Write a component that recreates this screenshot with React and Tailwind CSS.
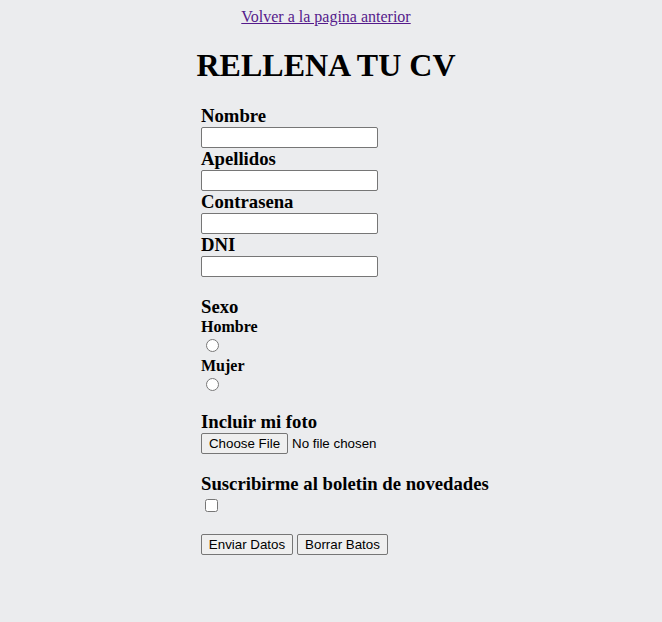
import { useState } from "react";

const Field = ({ label, type = "text" }) => (
    <div>
        <label className="block h-[22px] text-[18.72px] leading-[22px] font-bold">{label}</label>
        <input
            type={type}
            className="block w-[177px] h-[21px] bg-white border border-[#767676] rounded-[2px] px-[2px] text-[13.33px] font-['Liberation_Sans',sans-serif]"
        />
    </div>
);

const btn = "h-[21px] whitespace-nowrap bg-[#efefef] border border-[#767676] rounded-[2px] text-[13.33px] leading-[19px] text-black font-['Liberation_Sans',Arial,sans-serif]";

const App = () => {
    const [sexo, setSexo] = useState("");
    const [boletin, setBoletin] = useState(false);

    return (
        <div className="min-h-[622px] bg-[#ebecee] text-black font-['Liberation_Serif','Times_New_Roman',serif] pt-[8px]">
            <div className="w-[652px]">
                {/* enlace */}
                <div className="text-center h-[18px] leading-[18px] text-[16px]">
                    <a href="#" className="text-[#551a8b] underline">Volver a la pagina anterior</a>
                </div>

                <h1 className="text-center text-[32px] font-bold leading-[37px] mt-[21px] mb-[21px]">RELLENA TU CV</h1>

                <form className="pl-[201px]" onSubmit={(e) => e.preventDefault()}>
                    <Field label="Nombre" />
                    <Field label="Apellidos" />
                    <Field label="Contrasena" type="password" />
                    <Field label="DNI" />

                    {/* sexo */}
                    <div className="mt-[19px]">
                        <div className="h-[22px] text-[18.72px] leading-[22px] font-bold">Sexo</div>
                        <div className="h-[18px] text-[16px] leading-[18px] font-bold">Hombre</div>
                        <div className="h-[17px]">
                            <input
                                type="radio"
                                name="sexo"
                                checked={sexo === "h"}
                                onChange={() => setSexo("h")}
                                className="w-[13px] h-[13px] mt-[3px] ml-[5px] block"
                            />
                        </div>
                        <div className="h-[19px] text-[16px] leading-[19px] font-bold">Mujer</div>
                        <div className="h-[17px]">
                            <input
                                type="radio"
                                name="sexo"
                                checked={sexo === "m"}
                                onChange={() => setSexo("m")}
                                className="w-[13px] h-[13px] mt-[3px] ml-[5px] block"
                            />
                        </div>
                    </div>

                    {/* foto */}
                    <div className="mt-[16px]">
                        <div className="h-[22px] text-[18.72px] leading-[22px] font-bold">Incluir mi foto</div>
                        <div className="flex items-center gap-[4px] h-[21px] font-['Liberation_Sans',Arial,sans-serif] text-[13.33px]">
                            <button type="button" className={btn + " w-[87px]"}>Choose File</button>
                            <span>No file chosen</span>
                        </div>
                    </div>

                    {/* boletin */}
                    <div className="mt-[19px]">
                        <div className="h-[22px] text-[18.72px] leading-[22px] font-bold">Suscribirme al boletin de novedades</div>
                        <div className="h-[19px]">
                            <input
                                type="checkbox"
                                checked={boletin}
                                onChange={(e) => setBoletin(e.target.checked)}
                                className="w-[13px] h-[13px] mt-[4px] ml-[4px] block"
                            />
                        </div>
                    </div>

                    <div className="flex gap-[4px] mt-[16px]">
                        <button type="submit" className={btn + " w-[92px]"}>Enviar Datos</button>
                        <button type="reset" className={btn + " w-[91px]"}>Borrar Batos</button>
                    </div>
                </form>
            </div>
        </div>
    );
};

export default App;
